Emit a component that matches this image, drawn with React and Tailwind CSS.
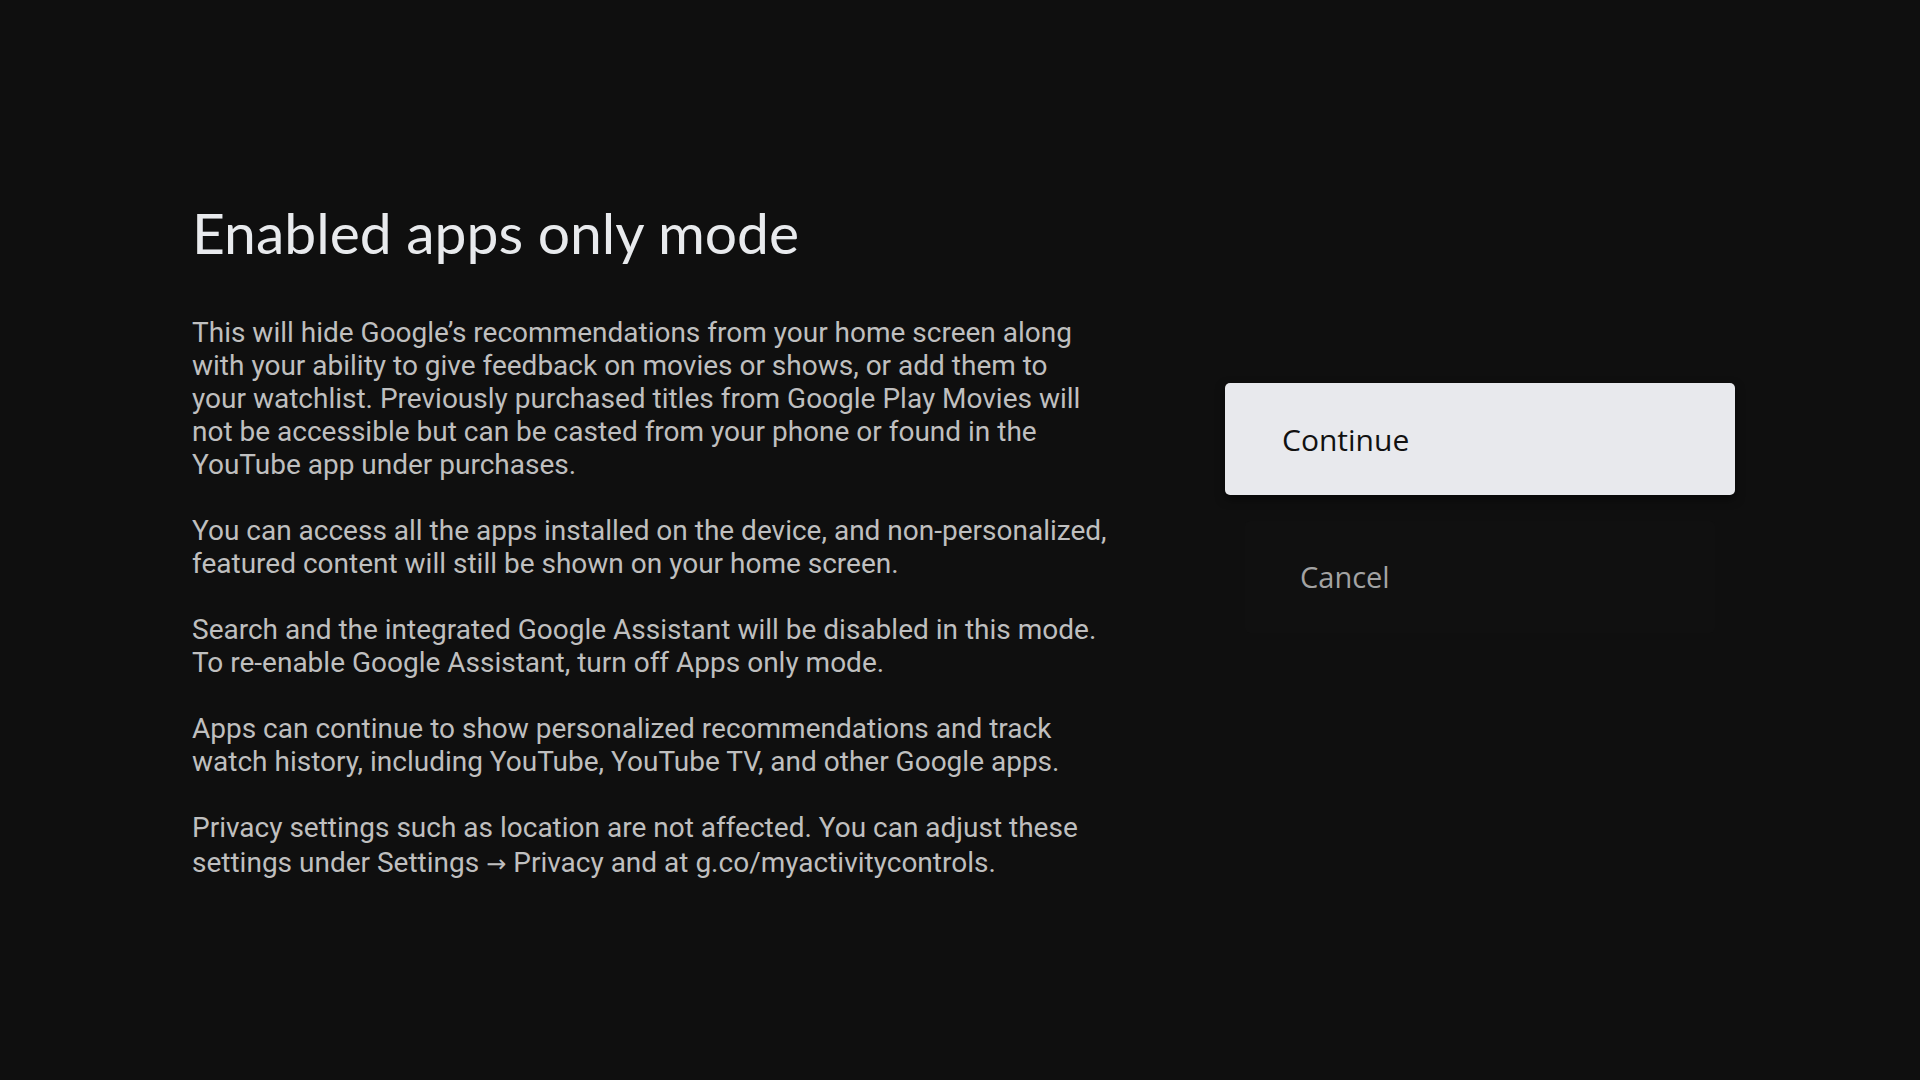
import React from 'react';

// Each paragraph is given as the lines the TV layout shows
const paragraphs = [
  [
    'This will hide Google’s recommendations from your home screen along',
    'with your ability to give feedback on movies or shows, or add them to',
    'your watchlist. Previously purchased titles from Google Play Movies will',
    'not be accessible but can be casted from your phone or found in the',
    'YouTube app under purchases.',
  ],
  [
    'You can access all the apps installed on the device, and non-personalized,',
    'featured content will still be shown on your home screen.',
  ],
  [
    'Search and the integrated Google Assistant will be disabled in this mode.',
    'To re-enable Google Assistant, turn off Apps only mode.',
  ],
  [
    'Apps can continue to show personalized recommendations and track',
    'watch history, including YouTube, YouTube TV, and other Google apps.',
  ],
];

const App = () => {
  return (
    <div className="w-[1920px] h-[1080px] bg-[#0f0f0f] overflow-hidden flex">
      {/* Left: title + description */}
      <div className="w-[1225px] pl-[192px] pt-[196px] shrink-0">
        <h1
          className="text-[57px] leading-[72px] text-[#e8eaed] font-normal"
          style={{ fontFamily: 'Lato, sans-serif' }}
        >
          Enabled apps only mode
        </h1>
        <div
          className="mt-[48px] w-[960px] text-[28px] leading-[33px] text-[#bfbfbf] flex flex-col gap-[33px] whitespace-nowrap"
          style={{ fontFamily: 'Roboto, sans-serif' }}
        >
          {paragraphs.map((lines, i) => (
            <p key={i}>
              {lines.map((l, j) => (
                <span key={j} className="block">
                  {l}
                </span>
              ))}
            </p>
          ))}
          <p>
            <span className="block">Privacy settings such as location are not affected. You can adjust these</span>
            <span className="block leading-[37px]">
              settings under Settings{' '}
              <span className="text-[24px]" style={{ fontFamily: '"DejaVu Sans", sans-serif' }}>
                →
              </span>{' '}
              Privacy and at g.co/myactivitycontrols.
            </span>
          </p>
        </div>
      </div>

      {/* Right: actions */}
      <div className="pt-[383px] flex flex-col gap-[26px]" style={{ fontFamily: '"Open Sans", sans-serif' }}>
        <button className="w-[510px] h-[112px] rounded-[5px] bg-[#e8e9ed] text-left pl-[57px] text-[30px] font-medium text-[#111] shadow-[0_4px_10px_rgba(0,0,0,0.5)]">
          Continue
        </button>
        <button className="w-[470px] h-[112px] ml-[20px] rounded-[5px] bg-[#101010] text-left pl-[55px] text-[29px] text-[#a3a3a3]">
          Cancel
        </button>
      </div>
    </div>
  );
};

export default App;
